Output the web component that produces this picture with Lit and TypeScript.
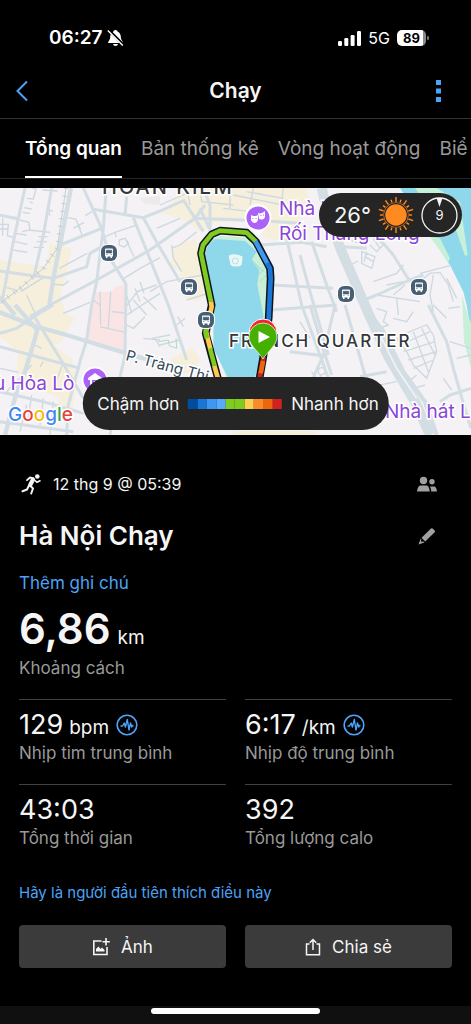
import { LitElement, html, svg, css } from "lit";
import { customElement } from "lit/decorators.js";

const TABS = ["Tổng quan", "Bản thống kê", "Vòng hoạt động", "Biể"];

const PACE = ["#004c9e", "#1976d6", "#3e97f3", "#56a9fb", "#80cb20", "#80cb20", "#ffcf52", "#fb8b28", "#ec660c", "#d42020"];

const STATS = [
  { value: "129", unit: "bpm", label: "Nhịp tim trung bình", chart: true },
  { value: "6:17", unit: "/km", label: "Nhịp độ trung bình", chart: true },
  { value: "43:03", unit: "", label: "Tổng thời gian", chart: false },
  { value: "392", unit: "", label: "Tổng lượng calo", chart: false },
];

const MINOR_ROADS = [
  "M95 9L108 12L100 42L80 40M72 68L95 72M98 55L90 50M68 82L90 86M60 105L86 112L90 135L66 140M86 135L150 142M45 145L80 150M45 170L82 178M40 195L82 202M115 155H142M110 170H140M100 187H132",
  "M0 118H25L22 152L42 158M8 100V152M0 132H22M128 15L172 18M150 92L145 75L158 78",
  "M200 98L228 102L246 150M220 130L252 112M256 92L276 80M236 122L242 132",
  "M305 160L345 142L405 122M345 142L348 156M358 165L375 160L386 175L372 186L358 180ZM378 165L402 215M372 280L420 250L480 218",
  "M160 298L190 300L206 288M178 250L262 205M80 330L105 385M62 320L130 278M20 308L48 315L52 322",
  "M380 330L395 385M405 310L420 350M378 365L412 320L470 300M420 290L432 325M380 390L480 325M400 345L440 390M430 335L470 375",
  "M280 345L300 360M300 320L302 420M332 320L325 430M335 380L376 384M300 425L376 442M190 385L270 352",
  "M380 420L400 430L435 395M430 460L480 465M465 460L480 485M0 550L55 562M20 620L95 540M105 480L125 490M120 545L130 530M95 630L85 700M130 640L120 720M60 740L80 660M160 650L150 750M165 600L190 530",
  "M480 60L560 25M470 130L540 100M515 190L540 180L590 140M515 180L520 220L545 260M450 320L500 290L610 270M530 420L555 400M533 395L550 425M455 460L510 450M480 480L540 465M560 345L625 325",
  "M560 9L570 60M600 9L605 50L700 60M690 9L690 70M740 20L850 40M760 9L750 60M670 70L800 85M850 9L840 90M700 30L850 60",
  "M1050 165L1100 180M1050 240L1075 228M1085 200L1125 215L1115 250L1085 235ZM1095 215L1120 230M1100 200L1092 230M1110 180L1130 200L1150 180L1130 160M1140 190L1120 160M1120 290L1190 265L1210 240M1160 300L1210 290M1180 330L1215 300M1190 340L1195 390M1265 285L1290 265L1320 262L1345 300L1360 350M1300 270L1290 330L1300 380M1130 330L1260 350M1260 265L1350 242M1340 280L1370 340",
  "M1130 370L1160 380L1150 410L1165 420L1125 435M1190 460L1240 435L1280 420L1300 450L1310 500L1280 580L1240 540L1220 500ZM1200 480L1290 440M1210 500L1305 470M1225 525L1310 500M1240 550L1300 525M1240 440L1285 560M1265 430L1305 510M1180 400L1220 410L1240 380M1240 610L1275 600M1225 590L1250 570M1330 580L1355 615M1300 360L1340 400M1350 470L1413 490M1370 520L1413 510M1345 370L1380 365",
  "M900 410L930 460M935 560L955 590M955 555A8 8 0 1 0 975 562A8 8 0 1 0 955 555M960 570L965 585M1090 610L1190 590",
];

const ROADS = [
  "M-5 90L58 102M75 9L55 100L38 180L8 340M155 9L130 150L103 270",
  "M250 9L305 130L330 220L378 298L375 512L345 640L330 750M318 20L310 130L290 290L275 360L260 465L240 530L205 660L200 750",
  "M280 73L430 98L480 78L555 45M375 90L380 35M180 180L305 130M0 258L100 272L160 280L260 245L270 205L300 188",
  "M90 395L150 360L290 285L450 195L585 100L615 60M400 98L450 222L505 360L560 525M430 98L475 180L540 290",
  "M0 445L50 430L110 390L160 360M100 390L180 520L250 640M0 485L240 550M0 620L130 650L250 685M0 710L220 740",
  "M550 45L610 140M600 70L630 135M610 9L630 60V130M585 100L800 108L900 115M780 180L905 172L980 185M860 160L905 360L1000 620M815 300L1000 310M810 375L1010 360",
  "M900 210L930 320L985 510M935 170L980 300L1010 380M930 360L975 510L995 570M1005 360L970 510L930 600M870 500L970 512M1035 360L1095 570M1030 185L1100 190M1070 80L1180 210L1230 290M1080 350L1130 330L1230 285L1270 270M1285 360L1340 470L1360 550L1400 690L1413 730M1080 575L1160 560M1413 610L1350 630L1320 650",
];

@customElement("run-map")
export class RunMap extends LitElement {
  static styles = css`
    :host { display: block; }
    svg { display: block; width: 100%; height: auto; font-family: Inter, "Noto Sans", sans-serif; }
    .land { fill: #f4f2f4; }
    .commerce { fill: #f6efdb; }
    .hospital { fill: #fbe5e4; }
    .park { fill: #c8f0d8; }
    .water { fill: #8fd8ec; }
    .minor { fill: none; stroke: #cdd8e0; stroke-width: 4; }
    .road { fill: none; stroke: #d3dde4; stroke-width: 9; stroke-linejoin: round; }
    .wide { stroke-width: 13; }
    .avenue { stroke-width: 30; }
    .rail { fill: none; stroke: #c4ced6; stroke-width: 3; }
    .ties { stroke-width: 14; stroke-dasharray: 3 20; }
    .casing { fill: none; stroke: #10141c; stroke-width: 23; stroke-linejoin: round; }
    .seg { fill: none; stroke-width: 14; stroke-linejoin: round; }
    .place { fill: #8a45d8; stroke: #fff; stroke-width: 3; paint-order: stroke; font-size: 19px; }
    .district { fill: #33373b; stroke: #fff; stroke-width: 3; paint-order: stroke; font-size: 17px; font-weight: 500; letter-spacing: 2px; }
    .big { font-size: 20px; }
    .street { fill: #36495a; stroke: #fff; stroke-width: 3; paint-order: stroke; font-size: 15px; }
    .google { font-size: 19px; font-weight: 500; stroke: #fff; stroke-width: 3; paint-order: stroke; }
  `;

  private bus(x: number, y: number) {
    return svg`<g transform="translate(${x} ${y})">
      <rect x="-9" y="-9" width="18" height="18" rx="7" fill="#fff" />
      <rect x="-8" y="-8" width="16" height="16" rx="6" fill="#465f74" />
      <path d="M-4 -3.5Q-4 -4.500 -3 -4.500H3Q4 -4.500 4 -3.500V3.500H3V5H1.500V3.500H-1.500V5H-3V3.500H-4Z" fill="#fff" />
      <path d="M-2.800 -2.800H2.800V0H-2.800ZM-2.800 1.500H-1.500M1.500 1.500H2.800" fill="#465f74" stroke="#465f74" stroke-width=".6" />
    </g>`;
  }

  render() {
    return html`<svg viewBox="0 0 471 247" role="img" aria-label="Bản đồ">
      <g transform="translate(0 -3) scale(0.33333)">
        <rect class="land" y="9" width="1413" height="741" />
        <path class="commerce" d="M0 225L140 246L150 175L215 190L200 260L180 340L200 388L225 400L180 475L160 480L215 520L230 590L215 680L165 670L180 640L80 600L50 560L55 500L0 455Z" />
        <path class="commerce" d="M480 80L530 40L530 9H920L925 40L900 110L870 170L800 160L740 110L650 110L600 140L560 110ZM515 185L590 160L600 240L630 330L590 350L555 340L540 260L515 240ZM510 522L575 490L600 520L590 560L520 570Z" />
        <path class="commerce" d="M700 738H950V750H700Z" />
        <path class="hospital" d="M285 320L335 320L345 305L378 298L376 510L255 465Z" />
        <path d="M420 40L480 32V60L430 55Z" fill="#eceaea" />
        <path class="water" d="M1200 9H1413V440L1400 360L1390 320L1350 240L1300 165Z" />
        <path class="park" d="M1245 9H1310L1380 50L1403 210L1395 212L1370 140L1290 70Z" />
        <path class="park" d="M1386 330L1400 380L1413 415V550L1392 470ZM1290 155L1320 160L1350 220L1345 230Z" />
        ${MINOR_ROADS.map((d) => svg`<path class="minor" d=${d} />`)}
        ${ROADS.map((d) => svg`<path class="road" d=${d} />`)}
        <path class="road wide" d="M213 9L180 180L160 280L148 360M0 335L45 390M-5 380L110 425L200 450L380 505L480 535M45 360L112 435L105 460L75 560L50 620L15 750" />
        <path class="road avenue" d="M965 9L985 95L1025 200L1060 280L1105 385L1165 515L1245 650L1290 750" />
        <path class="road wide" d="M1090 360L1150 440L1210 560L1275 650L1310 750" />
        <path d="M1135 440L1190 550L1250 640" fill="none" stroke="#f4f2f4" stroke-width="5" />
        <path class="rail" d="M198 9L180 130L172 190L130 250L60 310L0 355" />
        <path class="rail ties" d="M198 9L180 130L172 190L130 250L60 310L0 355" />
        <path d="M476 470L505 465L508 482L530 490L528 460" fill="none" stroke="#a9dfc0" stroke-width="3" />
        <path class="park" d="M655 152L740 158L775 190L800 250L802 300L795 400L785 500L765 580H680L640 480L640 360L608 205L630 165Z" />
        <path class="water" d="M625 178L645 162L735 168L770 200L755 225L778 255L772 300L790 390L790 460L780 530L760 590H690L640 490L642 360L612 215Z" />
        <path d="M755 225L790 260M775 270L800 245M780 290L800 270V380" fill="none" stroke="#a5ddb9" stroke-width="3" />
        <path d="M686 212Q705 202 728 215L725 240Q718 246 705 244Q690 246 690 232Z" fill="#e8f8f4" />
        <circle cx="706" cy="228" r="9" fill="none" stroke="#b8dfe0" stroke-width="3" />
        <path class="casing" d="M665 620L640 530L617 445L635 360L603 205L609 180L635 148L660 137L740 143L768 170L810 250L812 280L806 400L790 515L775 600" />
        <path class="seg" stroke="#80cb20" d="M633 350L603 205L609 180L635 148L660 137L740 143L768 170" />
        <path class="seg" stroke="#3e97f3" d="M766 168L803 237" />
        <path class="seg" stroke="#1976d6" d="M801 234L810 250L812 280L806 400L792 500" />
        <path class="seg" stroke="#ffc94d" d="M633 350L635 365L618 440L631 492M643 542L665 620" />
        <path class="seg" stroke="#80cb20" d="M618 425L617 445L621 460M630 490L644 543" />
        <path class="seg" stroke="#d42020" d="M791 515L775 600" />
        <path class="seg" stroke="#ec660c" d="M789 528L782 565" />
      </g>
      <text class="district big" x="102" y="6">HOÀN KIẾM</text>
      <text class="place" x="279" y="27">Nhà hát Múa</text>
      <text class="place" x="279" y="52">Rối Thăng Long</text>
      <text class="place" x="-6" y="202">ù Hỏa Lò</text>
      <text class="place" x="385" y="230">Nhà hát Lớn</text>
      <text class="street" transform="translate(125 172) rotate(15)">P. Tràng Thi</text>
      <text class="district" x="229" y="159">FRENCH QUARTER</text>
      ${this.bus(109, 65)} ${this.bus(189, 99)} ${this.bus(206, 132)} ${this.bus(346, 106)} ${this.bus(419, 99)}
      <g transform="translate(258 30)">
        <path d="M0 18L-7 11A13.500 13.500 0 1 1 7 11Z" fill="#fff" />
        <circle r="11.500" fill="#ad62f7" />
        <path d="M-7 -3L-5 -2H-2L0 -3V2Q-1 5 -3.500 5Q-7 4 -7 1ZM0 -5L2 -4.500L5 -5.500L7 -7V-1Q6 2 3.500 1.500L1 1Z" fill="#fff" />
        <path d="M-5.500 .5H-4.500M-2.500 .5H-1.500M2.500 -2.500H3.500M5 -3H6" stroke="#ad62f7" stroke-width="1" />
      </g>
      <g transform="translate(95 192)">
        <circle r="13.500" fill="#fff" />
        <circle r="11.500" fill="#ad62f7" />
        <path d="M-7 -2L0 -7L7 -2V0H-7ZM-5 0H-3V6H-5ZM-1 1H1V6H-1ZM3 0H5V6H3Z" fill="#fff" />
      </g>
      <circle cx="263" cy="145" r="14" fill="#f5222d" stroke="#fff" stroke-width="1" />
      <path d="M263 171C258 163 249 157 249 149A14 14 0 1 1 277 149C277 157 268 163 263 171Z" fill="#46b000" stroke="#eefae6" stroke-width=".7" />
      <path d="M258.500 143V155L270 149Z" fill="#fff" />
      <text class="google" x="8" y="233"><tspan fill="#4285f4">G</tspan><tspan fill="#ea4335">o</tspan><tspan fill="#fbbc04">o</tspan><tspan fill="#4285f4">g</tspan><tspan fill="#34a853">l</tspan><tspan fill="#ea4335">e</tspan></text>
    </svg>`;
  }
}

@customElement("app-root")
export class AppRoot extends LitElement {
  static styles = css`
    :host {
      display: flex;
      flex-direction: column;
      min-height: 100vh;
      overflow: hidden;
      background: #000;
      color: #f5f5f5;
      font-family: Inter, "Noto Sans", sans-serif;
      font-size: 16px;
      line-height: 20px;
    }
    * { box-sizing: border-box; }
    button { font: inherit; color: inherit; background: none; border: 0; padding: 0; margin: 0; cursor: pointer; }
    a { color: #4da3f7; text-decoration: none; }
    h1, h2, p, dl, dd, dt { margin: 0; font-weight: 400; }
    svg { display: block; flex: none; }

    .status { display: flex; align-items: center; justify-content: space-between; height: 64px; padding: 12px 42px 0 49px; color: #fff; }
    .clock, .signal { display: flex; align-items: center; }
    .clock { gap: 4px; font-size: 19px; font-weight: 600; }
    .signal { gap: 7px; font-size: 16px; }
    .battery { position: relative; width: 29px; height: 16px; border-radius: 5px; background: linear-gradient(90deg, #fff 88%, #8a8a8a 88%); color: #000; font-size: 13px; font-weight: 700; line-height: 16px; text-align: center; margin-right: 3px; }
    .battery::after { content: ""; position: absolute; right: -3px; top: 6px; width: 2px; height: 4px; border-radius: 1px; background: #777; }

    .bar { display: grid; grid-template-columns: 1fr auto 1fr; align-items: center; height: 55px; padding: 0 15px; border-bottom: 1px solid #333; }
    .bar h1 { font-size: 21px; line-height: 28px; font-weight: 600; }
    .more { justify-self: end; margin-right: 15px; }

    .tabs { display: flex; gap: 19px; height: 60px; padding-left: 25px; border-bottom: 1px solid #262626; overflow: hidden; }
    .tab { flex: none; padding-top: 2px; font-size: 19px; line-height: 24px; color: #999; white-space: nowrap; border-bottom: 2px solid transparent; }
    .tab.on { color: #fff; font-weight: 600; border-color: #fff; }

    .map { position: relative; margin-top: 9px; }
    .weather, .legend { position: absolute; display: flex; align-items: center; background: #252525; }
    .weather { top: 5px; right: 9px; height: 44px; padding: 0 4px 0 15px; gap: 7px; border-radius: 22px; font-size: 22px; }
    .legend { left: 50%; bottom: 5px; transform: translateX(-50%); height: 53px; padding: 0 10px 0 15px; gap: 9px; border-radius: 27px; font-size: 17px; white-space: nowrap; }
    .scale { display: grid; grid-template-columns: repeat(10, 1fr); width: 94px; height: 10px; }
    .wind { font-size: 13px; fill: #f5f5f5; }

    main { padding: 32px 19px 0; }
    .row { display: flex; align-items: center; justify-content: space-between; }
    .heading { margin-top: 15px; }
    .when { display: flex; align-items: center; gap: 10px; height: 34px; }
    .icon { width: 20px; height: 20px; margin-right: 15px; }
    h2 { font-size: 26px; line-height: 40px; font-weight: 600; }
    .note { display: block; margin-top: 17px; font-size: 17px; line-height: 20px; }
    .hero { display: flex; align-items: baseline; gap: 7px; margin: 11px 0 3px; font-size: 42px; line-height: 50px; font-weight: 600; }
    .hero small { font-size: 19px; line-height: 20px; font-weight: 400; }
    .caption { color: #999; font-size: 17px; line-height: 22px; }
    .stats { display: grid; grid-template-columns: 1fr 1fr; column-gap: 19px; margin-top: 20px; }
    .stat { display: flex; flex-direction: column; height: 85px; padding-top: 7px; border-top: 1px solid #404040; }
    .value { display: flex; align-items: center; gap: 7px; height: 35px; font-size: 27px; line-height: 34px; }
    .value small { font-size: 19px; line-height: 20px; }
    .amount { display: flex; align-items: baseline; gap: 6px; }
    .like { display: block; margin-top: 14px; font-size: 15px; line-height: 20px; }
    .actions { display: grid; grid-template-columns: 1fr 1fr; gap: 19px; margin-top: 22px; }
    .action { display: flex; align-items: center; justify-content: center; gap: 11px; height: 43px; border-radius: 4px; background: #3b3b3b; font-size: 17px; }

    footer { display: flex; justify-content: center; height: 18px; margin-top: auto; padding-top: 2px; background: #101010; }
    .home { width: 36%; height: 6px; border-radius: 3px; background: #fff; }
  `;

  private chartIcon() {
    return html`<svg width="22" height="22" viewBox="0 0 22 22" fill="none" stroke="#4da3f7">
      <circle cx="11" cy="11" r="9.800" stroke-width="1.600" />
      <path d="M4.500 12H6.500L8.200 9L9.400 13L11.300 5.500L13 16L14.500 9L15.800 13L16.500 11.500H17.500" stroke-width="1.400" stroke-linejoin="round" />
    </svg>`;
  }

  render() {
    const rays = Array.from({ length: 20 }, (_, i) => i * 18);
    return html`
      <div class="status">
        <div class="clock">
          <span>06:27</span>
          <svg width="17" height="18" viewBox="0 0 17 18">
            <path d="M8.500 1C10 1 10.500 2 10.500 2.500C13 3.500 13.800 6 13.800 8C13.800 11 16 12 16 14H1C1 12 3.200 11 3.200 8C3.200 5.500 4.500 3.500 6.500 2.500C6.500 2 7 1 8.500 1Z" fill="#fff" />
            <path d="M6 15H11Q10.500 17 8.500 17T6 15Z" fill="#fff" />
            <path d="M1.500 1L16.500 16" stroke="#000" stroke-width="3" />
            <path d="M.8 1.500L15.800 16.500" stroke="#fff" stroke-width="1.400" />
          </svg>
        </div>
        <div class="signal">
          <svg width="23" height="15" viewBox="0 0 23 15" fill="#fff">
            <rect y="10" width="4" height="5" rx="1.200" /><rect x="6.300" y="7" width="4" height="8" rx="1.200" />
            <rect x="12.600" y="4" width="4" height="11" rx="1.200" /><rect x="19" width="4" height="15" rx="1.200" />
          </svg>
          <span>5G</span>
          <span class="battery">89</span>
        </div>
      </div>

      <header class="bar">
        <button aria-label="Quay lại">
          <svg width="14" height="22" viewBox="0 0 14 22"><path d="M12 1.500L2.500 11L12 20.500" fill="none" stroke="#4da3f7" stroke-width="2" /></svg>
        </button>
        <h1>Chạy</h1>
        <button class="more" aria-label="Thêm">
          <svg width="5" height="22" viewBox="0 0 5 22" fill="#4da3f7"><path d="M0 0H5V5H0ZM0 8.500H5V13.500H0ZM0 17H5V22H0Z" /></svg>
        </button>
      </header>

      <nav class="tabs" role="tablist">
        ${TABS.map((t, i) => html`<button class="tab ${i === 0 ? "on" : ""}" role="tab" aria-selected=${i === 0}>${t}</button>`)}
      </nav>

      <section class="map">
        <run-map></run-map>
        <div class="weather">
          <span>26°</span>
          <svg width="36" height="36" viewBox="0 0 36 36">
            ${rays.map((a) => svg`<path d=${a % 36 ? "M18 5V2" : "M18 5V0"} transform="rotate(${a} 18 18)" stroke="#ff8a1f" stroke-width="1.400" />`)}
            <circle cx="18" cy="18" r="12.500" fill="#ff8a1f" />
            <circle cx="18" cy="18" r="11.300" fill="none" stroke="#252525" stroke-width="1.200" />
          </svg>
          <svg width="37" height="37" viewBox="0 0 37 37">
            <circle cx="18.500" cy="18.500" r="17.500" fill="none" stroke="#f5f5f5" stroke-width="1.300" />
            <path d="M15.500 1H21.500L18.500 10Z" fill="#f5f5f5" />
            <text class="wind" x="18.500" y="23" text-anchor="middle">9</text>
          </svg>
        </div>
        <div class="legend">
          <span>Chậm hơn</span>
          <div class="scale">${PACE.map((c) => html`<i style="background:${c}"></i>`)}</div>
          <span>Nhanh hơn</span>
        </div>
      </section>

      <main>
        <div class="row">
          <div class="when">
            <svg width="24" height="24" viewBox="0 0 24 24" fill="none" stroke="#f5f5f5" stroke-linecap="round" stroke-linejoin="round">
              <circle cx="18.300" cy="4.500" r="2.300" fill="#f5f5f5" stroke="none" />
              <path d="M8 8.200L11 5.500L14.500 6.300" stroke-width="1.800" />
              <path d="M14 7.500L11.300 12.800" stroke-width="4.200" />
              <path d="M16 8.500L18 10.300L21 8.800" stroke-width="1.600" />
              <path d="M11.500 14L14 16.500L12.200 21.500" stroke-width="2" />
              <path d="M10 13.500L8 17.500L3.500 19.300" stroke-width="2" />
            </svg>
            <span>12 thg 9 @ 05:39</span>
          </div>
          <svg class="icon" viewBox="0 0 20 20" fill="#a0a0a0">
            <circle cx="6.500" cy="6.500" r="3.700" /><circle cx="15" cy="7.700" r="2.700" />
            <path d="M0 17.500C.3 14 1.500 12 3 11.500H10C11.500 12 12.500 14 12.700 17.500ZM13 12.500H18Q19.500 14 20 17.500H14.300Q14 14.500 13 12.500Z" />
          </svg>
        </div>
        <div class="row heading">
          <h2>Hà Nội Chạy</h2>
          <button aria-label="Sửa">
            <svg class="icon" viewBox="0 0 20 20" fill="#a0a0a0">
              <path d="M14 2.500Q14.800 1.800 15.600 2.500L17.700 4.600Q18.400 5.400 17.700 6.200L8.200 15.500L4.500 11.800ZM3.700 12.500L4.300 13.200Q3.600 14.500 4.200 15.300Q5 16.200 6.500 15.600L7.500 16.400L1.500 18.500Z" />
            </svg>
          </button>
        </div>
        <a class="note" href="#note">Thêm ghi chú</a>
        <p class="hero">6,86 <small>km</small></p>
        <p class="caption">Khoảng cách</p>
        <dl class="stats">
          ${STATS.map((s) => html`<div class="stat">
            <dd class="value"><span class="amount">${s.value}${s.unit ? html` <small>${s.unit}</small>` : ""}</span>${s.chart ? this.chartIcon() : ""}</dd>
            <dt class="caption">${s.label}</dt>
          </div>`)}
        </dl>
        <a class="like" href="#like">Hãy là người đầu tiên thích điều này</a>
        <div class="actions">
          <button class="action">
            <svg width="18" height="18" viewBox="0 0 18 18" fill="none" stroke="#f5f5f5" stroke-width="1.600">
              <path d="M9.500 3H1.800V16.500H15V9" /><path d="M14 0V7.500M10.500 3.700H17.800" />
              <path d="M4 13.500V11L6.500 8.500L8.500 11L10 9.500L12.500 12V13.500Z" fill="#f5f5f5" stroke="none" />
            </svg>
            Ảnh
          </button>
          <button class="action">
            <svg width="16" height="18" viewBox="0 0 16 18" fill="none" stroke="#f5f5f5" stroke-width="1.500">
              <path d="M4.500 6H1.500V16.800H14.500V6H11.500M8 12V1.800M4.800 4.800L8 1.500L11.200 4.800" />
            </svg>
            Chia sẻ
          </button>
        </div>
      </main>
      <footer><div class="home"></div></footer>
    `;
  }
}
